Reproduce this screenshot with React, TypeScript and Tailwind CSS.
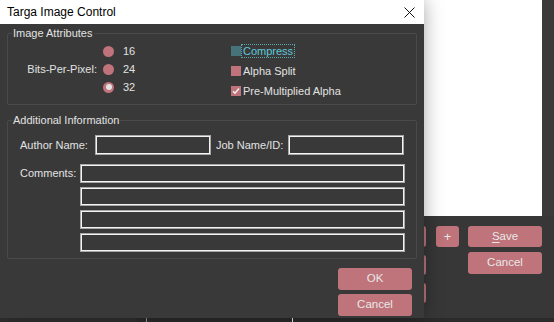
import React from 'react'

const FONT = { fontFamily: '"Liberation Sans", "Noto Sans", sans-serif' }

function GroupBox({ label, className, children }: { label: string; className: string; children: React.ReactNode }) {
  return (
    <div className={`relative border border-[#4a4a4a] rounded-[2px] ${className}`}>
      <span className="absolute left-[4px] top-[-8px] px-[1px] bg-[#393939] text-[11px] leading-[14px] text-[#e2e2e2]">
        {label}
      </span>
      {children}
    </div>
  )
}

function Radio({ label, checked }: { label: string; checked?: boolean }) {
  return (
    <div className="flex items-center h-[18px]">
      <span className="w-[11px] h-[11px] rounded-full bg-[#c0737b] flex items-center justify-center">
        {checked && <span className="w-[6px] h-[6px] rounded-full bg-[#e4e4e4]" />}
      </span>
      <span className="ml-[9px] text-[11px] text-[#e2e2e2]">{label}</span>
    </div>
  )
}

function Check({ label, color, checked, focused }: { label: string; color: string; checked?: boolean; focused?: boolean }) {
  return (
    <div className="flex items-center h-[20px]">
      <span className={`w-[10px] h-[10px] flex items-center justify-center ${color}`}>
        {checked && (
          <svg width="8" height="8" viewBox="0 0 8 8">
            <path d="M1 4.2 L3 6.2 L7 1.5" stroke="#f2f2f2" strokeWidth="1.4" fill="none" />
          </svg>
        )}
      </span>
      <span
        className={`ml-[1px] px-[1px] text-[11px] leading-[12px] ${
          focused ? 'text-[#5cc9dc] outline outline-1 outline-dotted outline-[#5aa9b0]' : 'text-[#e2e2e2]'
        }`}
      >
        {label}
      </span>
    </div>
  )
}

function Field({ className }: { className: string }) {
  return <div className={`border border-[#a8a8a8] shadow-[inset_0_0_0_1px_#f4f4f4] bg-[#393939] ${className}`} />
}

function PinkButton({ children, className }: { children?: React.ReactNode; className: string }) {
  return (
    <button className={`bg-[#bf737a] rounded-[3px] text-[11.5px] text-[#e8e8e8] flex items-center justify-center ${className}`}>
      {children}
    </button>
  )
}

export default function App() {
  return (
    <div className="relative w-[554px] h-[322px] overflow-hidden bg-[#373737]" style={FONT}>
      {/* app behind the dialog */}
      <div className="flex flex-col h-full">
        <div className="flex h-[216px]">
          <div className="w-[542px] bg-white" />
          <div className="flex-1 bg-[#3a3a3a]" />
        </div>
        <div className="flex h-[102px] pt-[10px]">
          <div className="ml-[352px] w-[74px] flex flex-col gap-[8px]">
            <PinkButton className="h-[21px]" />
            <PinkButton className="h-[20px]" />
            <PinkButton className="h-[20px]" />
          </div>
          <PinkButton className="ml-[10px] w-[23px] h-[21px] text-[13px]">+</PinkButton>
          <div className="ml-[9px] w-[74px] flex flex-col gap-[5px]">
            <PinkButton className="h-[21px]">
              <span className="underline underline-offset-2">S</span>ave
            </PinkButton>
            <PinkButton className="h-[22px]">Cancel</PinkButton>
          </div>
        </div>
        <div className="flex h-[4px] bg-[#2b2b2b]">
          <div className="w-[137px] bg-[#303030]" />
          <div className="w-[10px] border-r border-[#9a9a9a]" />
          <div className="w-[146px] border-r border-[#eeeeee]" />
        </div>
      </div>

      {/* dialog window */}
      <div className="absolute left-0 top-0 w-[424px] h-[318px] flex flex-col shadow-[0_0_18px_rgba(0,0,0,0.35)]">
        <div className="h-[24px] bg-white flex items-center justify-between pl-[7px] pr-[9px]">
          <span className="text-[12px] text-black">Targa Image Control</span>
          <svg width="11" height="11" viewBox="0 0 11 11">
            <path d="M0.5 0.5 L10.5 10.5 M10.5 0.5 L0.5 10.5" stroke="#111" strokeWidth="1" />
          </svg>
        </div>

        <div className="flex-1 bg-[#393939] px-[7px] pt-[9px] flex flex-col">
          <GroupBox label="Image Attributes" className="h-[72px]">
            <div className="flex pt-[8px]">
              <div className="w-[89px] h-[54px] flex items-center justify-end text-[11px] text-[#e2e2e2]">
                Bits-Per-Pixel:
              </div>
              <div className="ml-[6px] w-[128px] flex flex-col">
                <Radio label="16" />
                <Radio label="24" />
                <Radio label="32" checked />
              </div>
              <div className="flex flex-col mt-[-1px]">
                <Check label="Compress" color="bg-[#467379]" focused />
                <Check label="Alpha Split" color="bg-[#c0737b]" />
                <Check label="Pre-Multiplied Alpha" color="bg-[#c0737b]" checked />
              </div>
            </div>
          </GroupBox>

          <GroupBox label="Additional Information" className="mt-[15px] h-[139px]">
            <div className="flex items-center pt-[14px] pl-[12px] text-[11px] text-[#e2e2e2]">
              <span className="w-[75px]">Author Name:</span>
              <Field className="w-[116px] h-[20px]" />
              <span className="ml-[5px] w-[72px]">Job Name/ID:</span>
              <Field className="w-[116px] h-[20px]" />
            </div>
            <div className="flex pt-[9px] pl-[12px]">
              <span className="w-[60px] h-[19px] flex items-center text-[11px] text-[#e2e2e2]">Comments:</span>
              <div className="flex flex-col gap-[4px]">
                <Field className="w-[325px] h-[19px]" />
                <Field className="w-[325px] h-[19px]" />
                <Field className="w-[325px] h-[19px]" />
                <Field className="w-[325px] h-[19px]" />
              </div>
            </div>
          </GroupBox>

          <div className="flex flex-col items-end gap-[4px] mt-[9px] pr-[5px]">
            <PinkButton className="w-[74px] h-[22px]">OK</PinkButton>
            <PinkButton className="w-[74px] h-[22px]">Cancel</PinkButton>
          </div>
        </div>
      </div>
    </div>
  )
}
